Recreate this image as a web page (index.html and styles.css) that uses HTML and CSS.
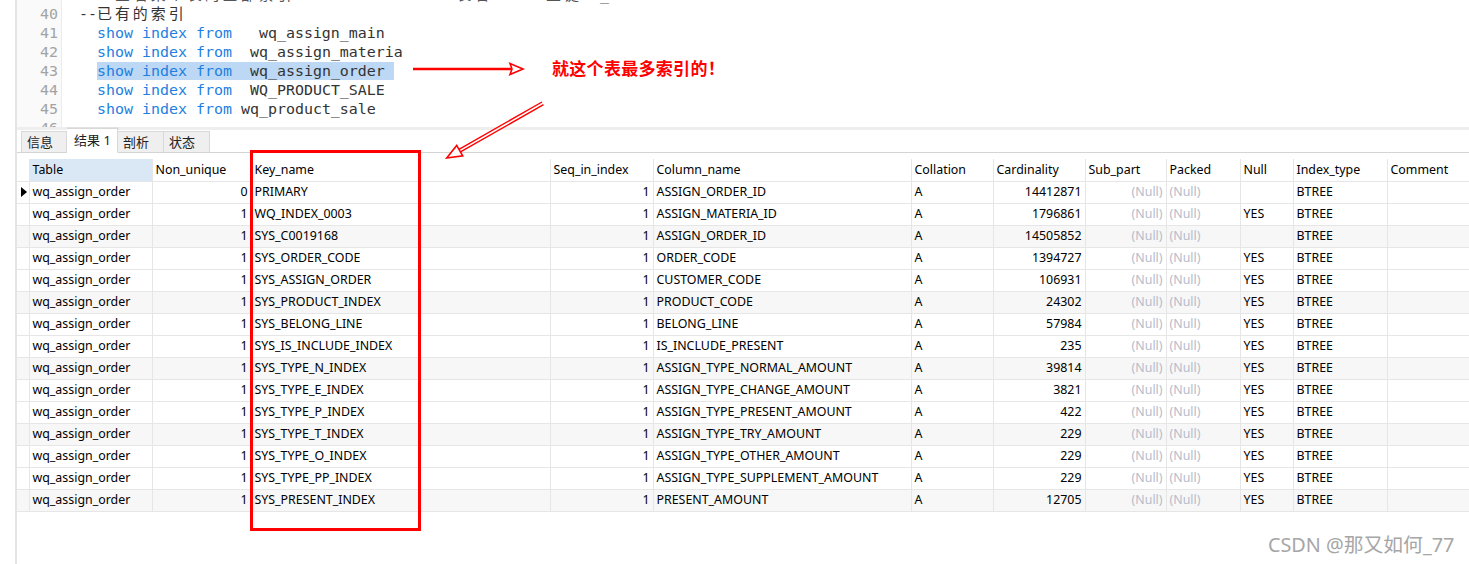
FILE: index.html
```html
<!DOCTYPE html>
<html lang="zh-CN">
<head>
<meta charset="utf-8">
<title>show index</title>
<link rel="stylesheet" href="styles.css">
</head>
<body>
<div class="window">
  <div class="editor">
    <div class="scroller">
      <div class="gutter">
        <div class="ln">39</div>
        <div class="ln">40</div>
        <div class="ln">41</div>
        <div class="ln">42</div>
        <div class="ln">43</div>
        <div class="ln">44</div>
        <div class="ln">45</div>
        <div class="ln">46</div>
      </div>
      <div class="code">
        <div class="line">  <span class="cm">--<span class="cjk">查看某个表的全部索引</span>  show index from <span class="cjk">表名</span>  --  <span class="cjk">主键</span>  _</span></div>
        <div class="line"><span class="tx">--<span class="cjk">已有的索引</span></span></div>
        <div class="line">  <span class="kw">show</span> <span class="kw">index</span> <span class="kw">from</span>   <span class="tx">wq_assign_main</span></div>
        <div class="line">  <span class="kw">show</span> <span class="kw">index</span> <span class="kw">from</span>  <span class="tx">wq_assign_materia</span></div>
        <div class="line">  <span class="sel"><span class="kw">show</span> <span class="kw">index</span> <span class="kw">from</span>  <span class="tx">wq_assign_order</span> </span></div>
        <div class="line">  <span class="kw">show</span> <span class="kw">index</span> <span class="kw">from</span>  <span class="tx">WQ_PRODUCT_SALE</span></div>
        <div class="line">  <span class="kw">show</span> <span class="kw">index</span> <span class="kw">from</span> <span class="tx">wq_product_sale</span></div>
        <div class="line"> </div>
      </div>
    </div>
  </div>
  <div class="hscroll"><div class="thumb"></div></div>
  <div class="tabs">
    <div class="tab">信息</div>
    <div class="tab active">结果 1</div>
    <div class="tab">剖析</div>
    <div class="tab">状态</div>
  </div>
  <div class="grid">
    <table>
      <colgroup>
        <col class="c-ind"><col class="c-table"><col class="c-nu"><col class="c-key"><col class="c-seq"><col class="c-col"><col class="c-coll"><col class="c-card"><col class="c-sub"><col class="c-pack"><col class="c-null"><col class="c-type"><col class="c-comm">
      </colgroup>
      <thead>
        <tr>
          <th class="ind"></th><th class="focus">Table</th><th>Non_unique</th><th>Key_name</th><th>Seq_in_index</th><th>Column_name</th><th>Collation</th><th>Cardinality</th><th>Sub_part</th><th>Packed</th><th>Null</th><th>Index_type</th><th>Comment</th>
        </tr>
      </thead>
      <tbody>
        <tr><td class="ind"><span class="cur"></span></td><td>wq_assign_order</td><td class="r">0</td><td>PRIMARY</td><td class="r">1</td><td>ASSIGN_ORDER_ID</td><td>A</td><td class="r">14412871</td><td class="r nul">(Null)</td><td class="nul">(Null)</td><td></td><td>BTREE</td><td></td></tr>
        <tr><td class="ind"></td><td>wq_assign_order</td><td class="r">1</td><td>WQ_INDEX_0003</td><td class="r">1</td><td>ASSIGN_MATERIA_ID</td><td>A</td><td class="r">1796861</td><td class="r nul">(Null)</td><td class="nul">(Null)</td><td>YES</td><td>BTREE</td><td></td></tr>
        <tr class="alt"><td class="ind"></td><td>wq_assign_order</td><td class="r">1</td><td>SYS_C0019168</td><td class="r">1</td><td>ASSIGN_ORDER_ID</td><td>A</td><td class="r">14505852</td><td class="r nul">(Null)</td><td class="nul">(Null)</td><td></td><td>BTREE</td><td></td></tr>
        <tr><td class="ind"></td><td>wq_assign_order</td><td class="r">1</td><td>SYS_ORDER_CODE</td><td class="r">1</td><td>ORDER_CODE</td><td>A</td><td class="r">1394727</td><td class="r nul">(Null)</td><td class="nul">(Null)</td><td>YES</td><td>BTREE</td><td></td></tr>
        <tr><td class="ind"></td><td>wq_assign_order</td><td class="r">1</td><td>SYS_ASSIGN_ORDER</td><td class="r">1</td><td>CUSTOMER_CODE</td><td>A</td><td class="r">106931</td><td class="r nul">(Null)</td><td class="nul">(Null)</td><td>YES</td><td>BTREE</td><td></td></tr>
        <tr class="alt"><td class="ind"></td><td>wq_assign_order</td><td class="r">1</td><td>SYS_PRODUCT_INDEX</td><td class="r">1</td><td>PRODUCT_CODE</td><td>A</td><td class="r">24302</td><td class="r nul">(Null)</td><td class="nul">(Null)</td><td>YES</td><td>BTREE</td><td></td></tr>
        <tr><td class="ind"></td><td>wq_assign_order</td><td class="r">1</td><td>SYS_BELONG_LINE</td><td class="r">1</td><td>BELONG_LINE</td><td>A</td><td class="r">57984</td><td class="r nul">(Null)</td><td class="nul">(Null)</td><td>YES</td><td>BTREE</td><td></td></tr>
        <tr><td class="ind"></td><td>wq_assign_order</td><td class="r">1</td><td>SYS_IS_INCLUDE_INDEX</td><td class="r">1</td><td>IS_INCLUDE_PRESENT</td><td>A</td><td class="r">235</td><td class="r nul">(Null)</td><td class="nul">(Null)</td><td>YES</td><td>BTREE</td><td></td></tr>
        <tr class="alt"><td class="ind"></td><td>wq_assign_order</td><td class="r">1</td><td>SYS_TYPE_N_INDEX</td><td class="r">1</td><td>ASSIGN_TYPE_NORMAL_AMOUNT</td><td>A</td><td class="r">39814</td><td class="r nul">(Null)</td><td class="nul">(Null)</td><td>YES</td><td>BTREE</td><td></td></tr>
        <tr><td class="ind"></td><td>wq_assign_order</td><td class="r">1</td><td>SYS_TYPE_E_INDEX</td><td class="r">1</td><td>ASSIGN_TYPE_CHANGE_AMOUNT</td><td>A</td><td class="r">3821</td><td class="r nul">(Null)</td><td class="nul">(Null)</td><td>YES</td><td>BTREE</td><td></td></tr>
        <tr><td class="ind"></td><td>wq_assign_order</td><td class="r">1</td><td>SYS_TYPE_P_INDEX</td><td class="r">1</td><td>ASSIGN_TYPE_PRESENT_AMOUNT</td><td>A</td><td class="r">422</td><td class="r nul">(Null)</td><td class="nul">(Null)</td><td>YES</td><td>BTREE</td><td></td></tr>
        <tr class="alt"><td class="ind"></td><td>wq_assign_order</td><td class="r">1</td><td>SYS_TYPE_T_INDEX</td><td class="r">1</td><td>ASSIGN_TYPE_TRY_AMOUNT</td><td>A</td><td class="r">229</td><td class="r nul">(Null)</td><td class="nul">(Null)</td><td>YES</td><td>BTREE</td><td></td></tr>
        <tr><td class="ind"></td><td>wq_assign_order</td><td class="r">1</td><td>SYS_TYPE_O_INDEX</td><td class="r">1</td><td>ASSIGN_TYPE_OTHER_AMOUNT</td><td>A</td><td class="r">229</td><td class="r nul">(Null)</td><td class="nul">(Null)</td><td>YES</td><td>BTREE</td><td></td></tr>
        <tr><td class="ind"></td><td>wq_assign_order</td><td class="r">1</td><td>SYS_TYPE_PP_INDEX</td><td class="r">1</td><td>ASSIGN_TYPE_SUPPLEMENT_AMOUNT</td><td>A</td><td class="r">229</td><td class="r nul">(Null)</td><td class="nul">(Null)</td><td>YES</td><td>BTREE</td><td></td></tr>
        <tr class="alt"><td class="ind"></td><td>wq_assign_order</td><td class="r">1</td><td>SYS_PRESENT_INDEX</td><td class="r">1</td><td>PRESENT_AMOUNT</td><td>A</td><td class="r">12705</td><td class="r nul">(Null)</td><td class="nul">(Null)</td><td>YES</td><td>BTREE</td><td></td></tr>
      </tbody>
    </table>
  </div>
</div>

<div class="mark-box"></div>
<svg class="arrows" width="1469" height="564" viewBox="0 0 1469 564" aria-hidden="true">
  <g fill="none" stroke="#ff0000" stroke-linejoin="miter">
    <line x1="413" y1="69" x2="511" y2="69" stroke-width="2.5"/>
    <polygon points="510,63.5 523,69 510,74.5 512,69" fill="#fff" stroke-width="1.6"/>
    <line x1="543.5" y1="104.6" x2="460.5" y2="151.9" stroke-width="1.4"/>
    <line x1="542" y1="102" x2="459" y2="149.3" stroke-width="1.4"/>
    <polygon points="446.7,158 456.7,145.4 459.7,150.6 462.7,155.8" fill="#fff" stroke-width="1.6"/>
  </g>
</svg>
<div class="callout">就这个表最多索引的！</div>
<div class="watermark">CSDN @那又如何_77</div>
</body>
</html>
```

FILE: styles.css
```css
* { box-sizing: border-box; }

html, body {
  margin: 0;
  padding: 0;
  background: #ffffff;
}

body {
  width: 1469px;
  height: 564px;
  overflow: hidden;
  position: relative;
  font-family: "Noto Sans", "Noto Sans CJK SC", sans-serif;
}

.window {
  margin-left: 15px;
  height: 564px;
  border-left: 2px solid #e4e4e4;
  display: flex;
  flex-direction: column;
}

/* ---------- editor ---------- */
.editor {
  height: 127px;
  overflow: hidden;
  flex: none;
}

.scroller {
  display: flex;
  margin-top: -14px;
  font-family: "DejaVu Sans Mono", "Noto Sans CJK SC", monospace;
  font-size: 14.95px;
  line-height: 19px;
}

.gutter {
  width: 45px;
  flex: none;
  background: #fafafa;
  border-right: 1px solid #ececec;
  padding-right: 3px;
  text-align: right;
  color: #a3a3a3;
}

.ln { height: 19px; }

.code {
  padding-left: 17px;
  color: #333333;
}

.line {
  height: 19px;
  white-space: pre;
}

.kw { color: #1e7fe0; }
.tx { color: #333333; }
.cm { color: #555555; }
.cjk { letter-spacing: 3px; }
.sel { background: #bcd8f5; }

.hscroll {
  height: 3px;
  flex: none;
  background: #eeeeee;
}
.hscroll .thumb {
  margin-left: 50px;
  width: 52px;
  height: 3px;
  background: #e2e2e2;
}

/* ---------- tabs ---------- */
.tabs {
  height: 23px;
  flex: none;
  display: flex;
  align-items: flex-end;
  padding-left: 4px;
  border-bottom: 1px solid #d4d4d4;
  font-size: 13px;
}

.tab {
  height: 22px;
  width: 46px;
  margin-bottom: -1px;
  background: #efefef;
  border: 1px solid #d8d8d8;
  border-bottom: 1px solid #d4d4d4;
  border-left: none;
  color: #222;
  padding-left: 5px;
  line-height: 21px;
}
.tab:first-child { border-left: 1px solid #d8d8d8; }
.tab.active {
  height: 25px;
  width: 51px;
  background: #ffffff;
  border-bottom-color: #ffffff;
  padding-left: 7px;
  line-height: 22px;
}

/* ---------- grid ---------- */
.grid {
  padding-top: 6px;
  flex: 1;
}

table {
  border-collapse: collapse;
  table-layout: fixed;
  width: 1452px;
  font-size: 12.4px;
  color: #000;
}

col.c-ind { width: 12px; }
col.c-table { width: 123px; }
col.c-nu { width: 99px; }
col.c-key { width: 299px; }
col.c-seq { width: 103px; }
col.c-col { width: 258px; }
col.c-coll { width: 82px; }
col.c-card { width: 92px; }
col.c-sub { width: 81px; }
col.c-pack { width: 74px; }
col.c-null { width: 53px; }
col.c-type { width: 94px; }
col.c-comm { width: 82px; }

th, td {
  height: 22px;
  padding: 0 3px;
  border: 1px solid #e6e6e6;
  white-space: nowrap;
  overflow: hidden;
  text-align: left;
  font-weight: normal;
  line-height: 20px;
}

thead th {
  border-top: none;
  background: #ffffff;
}
thead th.focus { background: #dae8f6; }
th.ind, td.ind { padding: 0; border-left: none; }

td.r { text-align: right; }
td.nul { color: #b5bccb; }

tr.alt td { background: #f7f7f7; }

.cur {
  display: block;
  width: 0;
  height: 0;
  margin-left: 4px;
  border-top: 5px solid transparent;
  border-bottom: 5px solid transparent;
  border-left: 6px solid #000;
}

/* ---------- annotations ---------- */
.mark-box {
  position: absolute;
  left: 250px;
  top: 150px;
  width: 171px;
  height: 381px;
  border: 3px solid #ff0000;
}

.arrows {
  position: absolute;
  left: 0;
  top: 0;
  pointer-events: none;
}

.callout {
  position: absolute;
  left: 552px;
  top: 56px;
  font-family: "Noto Sans CJK SC", sans-serif;
  font-weight: bold;
  font-size: 17px;
  letter-spacing: 0.3px;
  color: #ff0000;
  line-height: 24px;
}

.watermark {
  position: absolute;
  left: 1268px;
  top: 531px;
  font-family: "Noto Sans", "Noto Sans CJK SC", sans-serif;
  font-size: 19.8px;
  color: #a6a6a6;
  line-height: 28px;
  text-shadow: 0 0 1px #ffffff;
}
```
